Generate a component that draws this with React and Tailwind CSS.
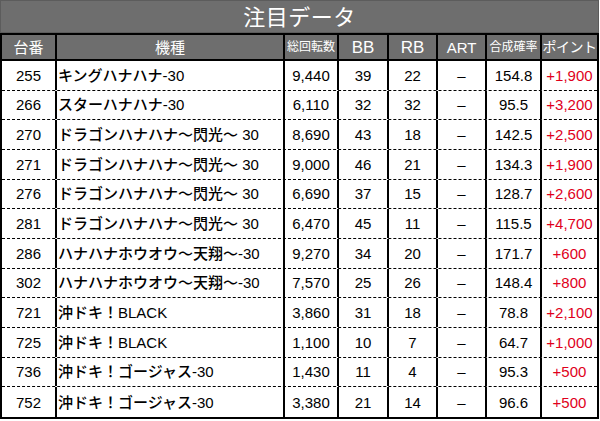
const rows = [
  ['255', 'キングハナハナ-30', '9,440', '39', '22', '154.8', '+1,900'],
  ['266', 'スターハナハナ-30', '6,110', '32', '32', '95.5', '+3,200'],
  ['270', 'ドラゴンハナハナ～閃光～ 30', '8,690', '43', '18', '142.5', '+2,500'],
  ['271', 'ドラゴンハナハナ～閃光～ 30', '9,000', '46', '21', '134.3', '+1,900'],
  ['276', 'ドラゴンハナハナ～閃光～ 30', '6,690', '37', '15', '128.7', '+2,600'],
  ['281', 'ドラゴンハナハナ～閃光～ 30', '6,470', '45', '11', '115.5', '+4,700'],
  ['286', 'ハナハナホウオウ～天翔～-30', '9,270', '34', '20', '171.7', '+600'],
  ['302', 'ハナハナホウオウ～天翔～-30', '7,570', '25', '26', '148.4', '+800'],
  ['721', '沖ドキ！BLACK', '3,860', '31', '18', '78.8', '+2,100'],
  ['725', '沖ドキ！BLACK', '1,100', '10', '7', '64.7', '+1,000'],
  ['736', '沖ドキ！ゴージャス-30', '1,430', '11', '4', '95.3', '+500'],
  ['752', '沖ドキ！ゴージャス-30', '3,380', '21', '14', '96.6', '+500'],
];

const cols = 'grid grid-cols-[55px_228px_54px_50px_49px_49px_55px_55px]';
const cell = 'flex items-center justify-center border-r-2 border-black whitespace-nowrap leading-none';

export default function App() {
  return (
    <div
      className="w-[599px] h-[421px] bg-white text-black"
      style={{ fontFamily: '"Liberation Sans", "Noto Sans CJK JP", sans-serif' }}
    >
      {/* title */}
      <div className="h-[33px] bg-[#6e6e6e] border border-[#5c5c5c] flex items-center justify-center pt-[3px]">
        <span className="text-white text-[22px] leading-none tracking-[0.5px]">注目データ</span>
      </div>
      <div className="h-[2px] bg-black" />

      <div className="border-x-2 border-b-2 border-black">
        {/* header */}
        <div className={`${cols} h-[26px] bg-[#6e6e6e] border-b-2 border-black text-white`}>
          <div className={`${cell} text-[15px]`}>台番</div>
          <div className={`${cell} text-[15px]`}>機種</div>
          <div className={`${cell} text-[12px]`}>総回転数</div>
          <div className={`${cell} text-[17px] pt-[1px]`}>BB</div>
          <div className={`${cell} text-[17px] pt-[1px]`}>RB</div>
          <div className={`${cell} text-[15px] pt-[1px]`}>ART</div>
          <div className={`${cell} text-[12px]`}>合成確率</div>
          <div className="flex items-center justify-center whitespace-nowrap leading-none text-[14px] tracking-[-0.5px]">
            ポイント
          </div>
        </div>

        {/* rows */}
        {rows.map((r, i) => (
          <div
            key={i}
            className={`${cols} h-[29.67px] text-[15px] font-medium ${i < rows.length - 1 ? 'border-b border-dashed border-black' : ''}`}
          >
            <div className={cell}>{r[0]}</div>
            <div className={`${cell} !justify-start pl-[1px]`}>{r[1]}</div>
            <div className={cell}>{r[2]}</div>
            <div className={cell}>{r[3]}</div>
            <div className={cell}>{r[4]}</div>
            <div className={cell}>–</div>
            <div className={cell}>{r[5]}</div>
            <div className="flex items-center justify-center whitespace-nowrap leading-none text-[#e0001b]">{r[6]}</div>
          </div>
        ))}
      </div>
    </div>
  );
}
